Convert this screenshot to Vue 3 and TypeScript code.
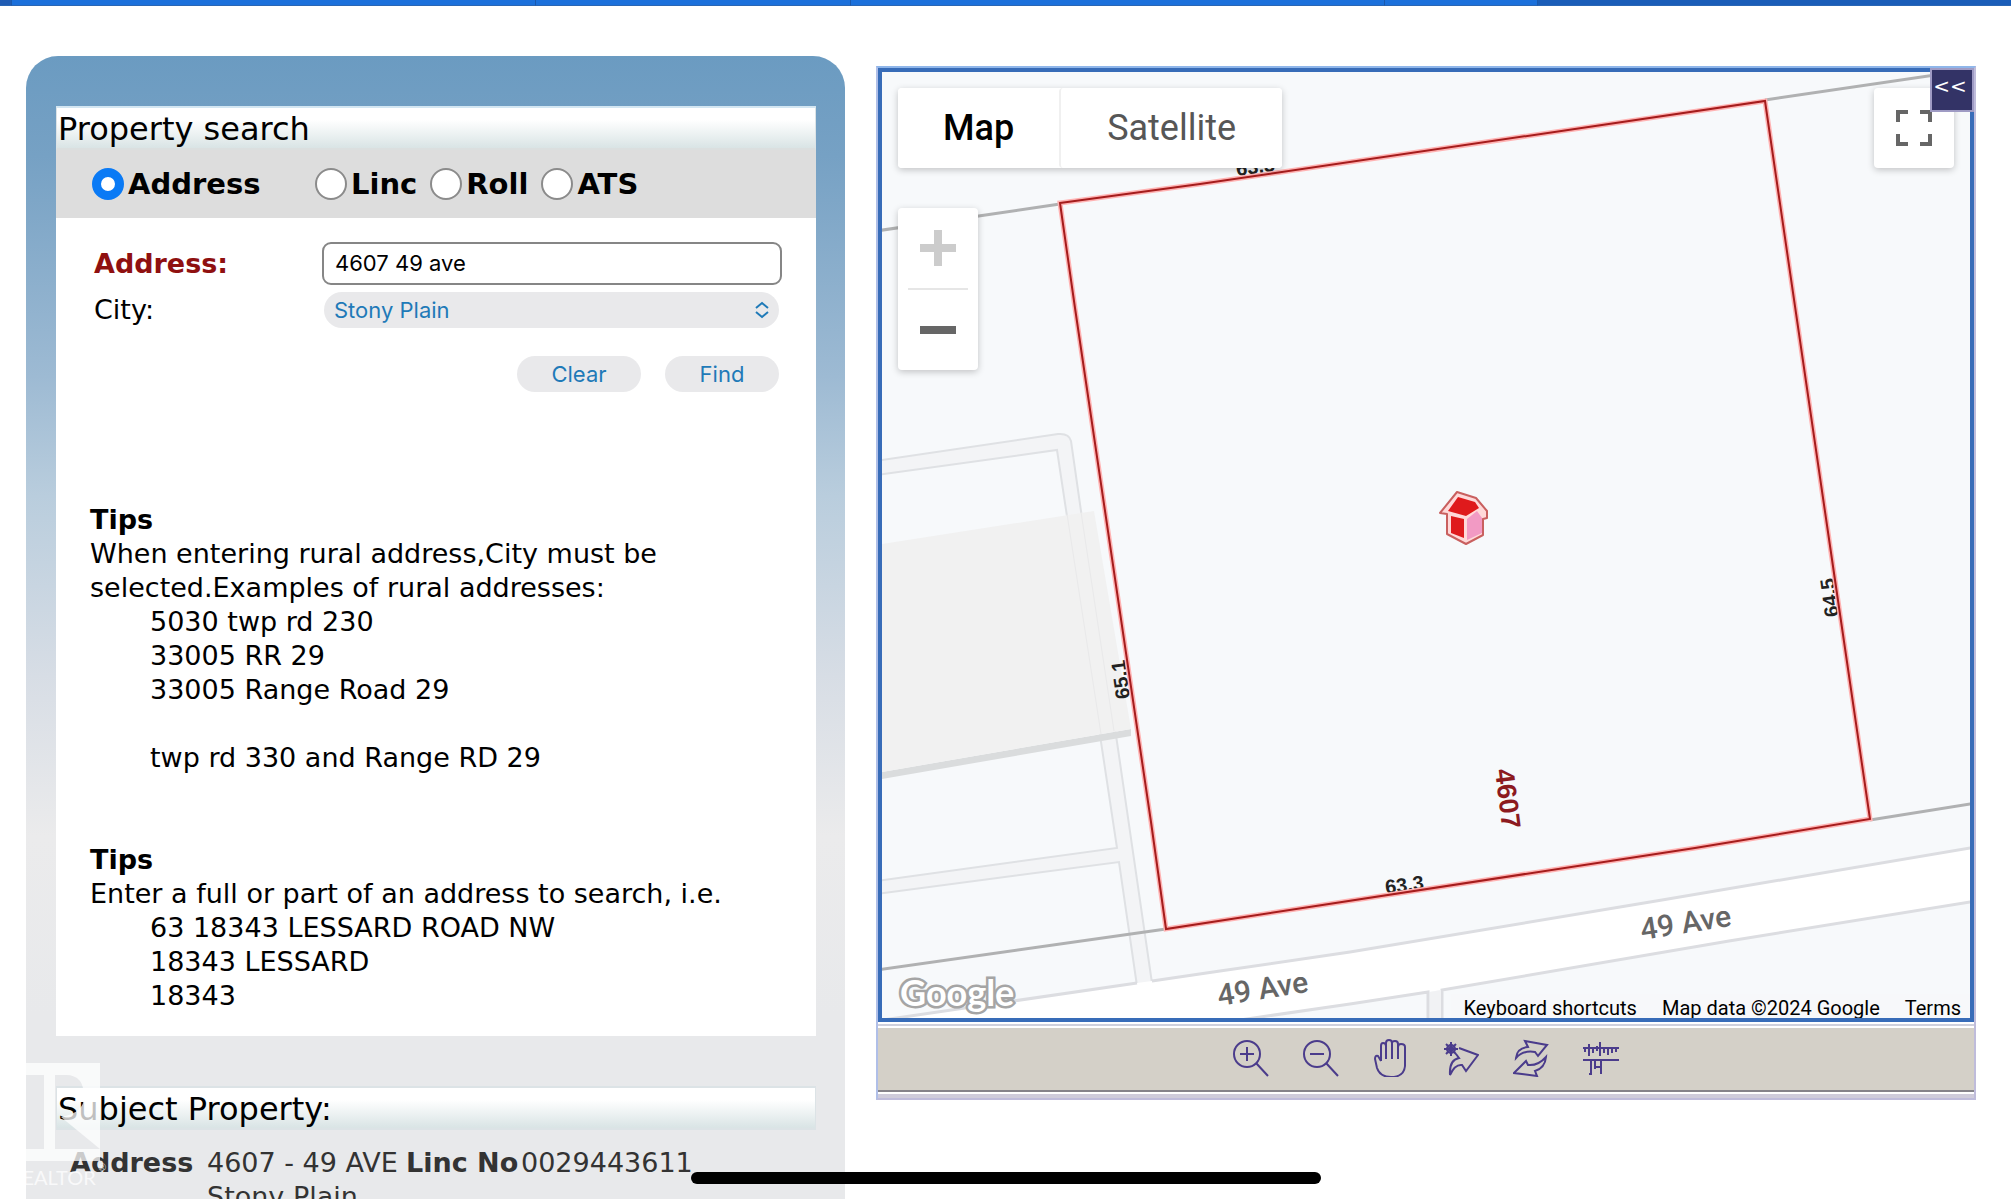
<script setup lang="ts">
import { ref } from 'vue'

interface SearchMode {
  id: string
  label: string
}

const modes: SearchMode[] = [
  { id: 'address', label: 'Address' },
  { id: 'linc', label: 'Linc' },
  { id: 'roll', label: 'Roll' },
  { id: 'ats', label: 'ATS' },
]

const mode = ref('address')
const address = ref('4607 49 ave')
const city = ref('Stony Plain')
const mapType = ref<'map' | 'satellite'>('map')

const ruralExamples: string[] = ['5030 twp rd 230', '33005 RR 29', '33005 Range Road 29']
const addressExamples: string[] = ['63 18343 LESSARD ROAD NW', '18343 LESSARD', '18343']

function clearForm(): void {
  address.value = ''
}
</script>

<template>
  <div class="page">
    <nav class="topbar" aria-label="Sections">
      <span class="seg edge"></span>
      <span class="seg one"></span>
      <span class="seg two"></span>
      <span class="seg three"></span>
      <span class="seg four"></span>
      <span class="seg rest"></span>
    </nav>

    <main class="columns">
      <section class="panel">
        <div class="card">
          <h1 class="heading">Property search</h1>
          <div class="modes" role="radiogroup" aria-label="Search by">
            <label v-for="m in modes" :key="m.id" class="mode" :class="m.id">
              <input v-model="mode" type="radio" name="mode" :value="m.id" />{{ m.label }}
            </label>
          </div>

          <form class="form" @submit.prevent>
            <label for="address" class="required">Address:</label>
            <input id="address" v-model="address" type="text" class="field" />
            <label for="city">City:</label>
            <div class="picker">
              <select id="city" v-model="city">
                <option>Stony Plain</option>
              </select>
              <svg class="chevrons" viewBox="0 0 16 18" aria-hidden="true">
                <path d="M2 7 8 2l6 5M2 11l6 5 6-5" />
              </svg>
            </div>
            <div class="actions">
              <button type="button" class="pill clear" @click="clearForm">Clear</button>
              <button type="submit" class="pill find">Find</button>
            </div>
          </form>

          <div class="tips">
            <h2>Tips</h2>
            <p>When entering rural address,City must be selected.Examples of rural addresses:</p>
            <ul>
              <li v-for="e in ruralExamples" :key="e">{{ e }}</li>
              <li class="spaced">twp rd 330 and Range RD 29</li>
            </ul>
            <h2>Tips</h2>
            <p>Enter a full or part of an address to search, i.e.</p>
            <ul class="last">
              <li v-for="e in addressExamples" :key="e">{{ e }}</li>
            </ul>
          </div>
        </div>

        <h1 class="heading subject">Subject Property:</h1>
        <table class="facts">
          <tbody>
            <tr>
              <th scope="row" class="c1">Address</th>
              <td class="c2">4607 - 49 AVE<br />Stony Plain</td>
              <th scope="row" class="c3">Linc No</th>
              <td>0029443611</td>
            </tr>
          </tbody>
        </table>
      </section>

      <section class="mapframe">
        <div class="map">
          <svg class="canvas" viewBox="882 72 1088 946" role="img" aria-label="Parcel map">
            <rect x="882" y="72" width="1088" height="946" fill="#f7f9fb" />
            <!-- parking lanes -->
            <g stroke="#dfe1e4" stroke-width="2">
              <path
                d="M876 461 1058 434Q1069 433 1071 441L1081 511 1117 742 1152 983 1137 986 1119 862 876 894V881L1117 848 1057 450 876 475Z"
                fill="#f3f4f6"
              />
            </g>
            <!-- road -->
            <path
              d="M876 1021 1137 983 1152 981 1220 971 1350 952 1662 900 1976 847V901L1729 940 1441 990 1350 1004 1240 1022H876Z"
              fill="#fff"
            />
            <g fill="none" stroke="#dcdde1" stroke-width="3">
              <path d="M876 1021 1137 983M1152 981 1220 971 1350 952 1662 900 1976 847" />
              <path d="M1240 1020 1350 1004 1428 992V1020M1442 1020V990L1729 941 1976 901" />
            </g>
            <path d="M1430 992 1441 990V1020H1430Z" fill="#f1f2f4" />
            <!-- building -->
            <path d="M876 773 1131 729V736L876 780Z" fill="#dadcdd" />
            <path d="M876 545 1094 511 1131 729 876 773Z" fill="#f1f1f1" />
            <path
              d="M1067 514 1101 734M1081 512 1114 731"
              fill="none"
              stroke="#e9e9ea"
              stroke-width="1"
            />
            <!-- neighbouring parcel edges -->
            <g stroke="#b0b1b2" stroke-width="3">
              <path d="M876 231 1060 204" />
              <path d="M1765 100 1976 69" />
              <path d="M1870 820 1976 803" />
              <path d="M876 970 1166 929" />
            </g>
            <g class="dims">
              <text transform="translate(1237 176) rotate(-8)">63.3</text>
              <text transform="translate(1130 698) rotate(-98)">65.1</text>
              <text transform="translate(1839 616) rotate(-98)">64.5</text>
              <text transform="translate(1386 894) rotate(-7)">63.3</text>
            </g>
            <path
              d="M1060 203 1200 184 1765 101 1835 580 1870 819 1695 848 1166 929 1151 822 1075 308Z"
              fill="none"
              stroke="#ffb3b3"
              stroke-width="5"
            />
            <path
              d="M1060 203 1200 184 1765 101 1835 580 1870 819 1695 848 1166 929 1151 822 1075 308Z"
              fill="none"
              stroke="#a51c1c"
              stroke-width="2"
            />
            <text class="lot" transform="translate(1495 770) rotate(83)">4607</text>
            <text class="road" transform="translate(1219 1006) rotate(-9)">49 Ave</text>
            <text class="road" transform="translate(1642 940) rotate(-9)">49 Ave</text>
            <text class="brand" x="900" y="1006">Google</text>
            <!-- subject property marker -->
            <g stroke-linejoin="round">
              <path
                d="M1457 492 1476 498 1487 511V518L1483 519V535L1466 544 1447 534V514L1440 513Z"
                fill="#ffd9d9"
                stroke="#c9605f"
                stroke-width="2"
              />
              <path d="M1458 497 1475 502 1479 508 1466 516 1448 511Z" fill="#df1a1c" />
              <path d="M1451 516 1464 519V538L1451 533Z" fill="#df1a1c" />
              <path d="M1467 519 1477 511 1482 518V533L1467 540Z" fill="#f29ac4" />
            </g>
          </svg>

          <div class="types">
            <button type="button" :class="{ on: mapType === 'map' }" class="t-map" @click="mapType = 'map'">Map</button>
            <button type="button" :class="{ on: mapType === 'satellite' }" class="t-sat" @click="mapType = 'satellite'">Satellite</button>
          </div>
          <div class="zoom">
            <button type="button" aria-label="Zoom in">
              <svg viewBox="0 0 36 36"><path d="M14 0h8v14h14v8H22v14h-8V22H0v-8h14z" fill="#ccc" /></svg>
            </button>
            <hr />
            <button type="button" aria-label="Zoom out">
              <svg viewBox="0 0 36 36"><path d="M0 14h36v8H0z" fill="#666" /></svg>
            </button>
          </div>
          <button type="button" class="full" aria-label="Toggle fullscreen">
            <svg viewBox="0 0 36 36">
              <path d="M0 0h12v4H4v8H0zM24 0h12v12h-4V4h-8zM0 24h4v8h8v4H0zM32 24h4v12H24v-4h8z" fill="#666" />
            </svg>
          </button>
          <div class="credits">
            <a href="#">Keyboard shortcuts</a>
            <span>Map data ©2024 Google</span>
            <a href="#">Terms</a>
          </div>
        </div>
        <button type="button" class="collapse" aria-label="Collapse map">&lt;&lt;</button>

        <div class="tools">
          <button type="button" aria-label="Zoom in">
            <svg viewBox="0 0 36 38"><circle cx="14" cy="15" r="13" /><path d="M23 24 35 37M7 15h14M14 8v14" /></svg>
          </button>
          <button type="button" aria-label="Zoom out">
            <svg viewBox="0 0 36 38"><circle cx="14" cy="15" r="13" /><path d="M23 24 35 37M7 15h14" /></svg>
          </button>
          <button type="button" aria-label="Pan">
            <svg viewBox="0 0 36 38">
              <path
                d="M8 22V7Q8 4 10 4 13 4 13 7V20M13 7V4Q13 1 16 1 19 1 19 4V20M19 4Q19 2 22 2 25 2 25 5V20M25 8Q25 5 28 5 32 5 32 8V27Q31 38 18 38 7 38 4 29L2 20Q2 16 5 17L8 22"
              />
            </svg>
          </button>
          <button type="button" aria-label="Previous view">
            <svg viewBox="0 0 36 38">
              <path
                d="M16 9 35 16 23 32 19 26Q12 25 7 36 6 21 16 19L13 15M8 3V17M1 10H15M3 5 13 15M13 5 3 15"
              />
              <circle cx="8" cy="10" r="4" />
            </svg>
          </button>
          <button type="button" aria-label="Refresh">
            <svg viewBox="0 0 36 38">
              <path
                d="M12 2 34 6 25 17 22 13Q10 11 3 19 4 9 15 8ZM24 37 1 34 13 22 15 26Q25 27 33 18 32 29 22 32Z"
              />
            </svg>
          </button>
          <button type="button" aria-label="Measure">
            <svg viewBox="0 0 36 38">
              <path
                d="M0 9H36M0 21H36M6 5V17M10 9V14M17 3V17M21 9V14M14 7V12M25 9V16M29 9V14M33 9V13M2 9V13M8 21V35M18 21V35M12 22V30M12 28H18M6 35H9"
              />
            </svg>
          </button>
        </div>
        <div class="track"></div>
      </section>
    </main>

    <svg class="stamp" viewBox="0 0 110 136" aria-label="Realtor">
      <path
        fill-rule="evenodd"
        d="M4 0H100V98H4ZM16 12V86H44V12ZM55 12V86H100L61 54Q84 50 84 34 84 12 66 12Z"
        fill="#fff"
        opacity=".75"
      />
      <text x="10" y="122">REALTOR</text>
      <text x="98" y="108" class="reg">®</text>
    </svg>
    <div class="home"></div>
  </div>
</template>

<style>
body {
  margin: 0;
  background: #fff;
}
</style>

<style scoped>
* {
  box-sizing: border-box;
}
.page {
  position: relative;
  height: 100vh;
  overflow: hidden;
  background: #fff;
  color: #000;
  font: 27px/34px "DejaVu Sans", Verdana, sans-serif;
}
button {
  margin: 0;
  padding: 0;
  border: 0;
  cursor: pointer;
}
.topbar {
  display: flex;
  height: 6px;
}
.seg {
  background: #1b70db;
  border-bottom: 1px solid #2a66b4;
  border-right: 1px solid #1a59ad;
}
.edge { flex: 11; background: #1f5cb4; }
.one { flex: 524; }
.two { flex: 315; }
.three { flex: 534; }
.four { flex: 153; }
.rest { flex: 474; background: #1a5db8; border-right: 0; }
.columns {
  display: grid;
  grid-template-columns: minmax(0, 819fr) minmax(0, 1100fr);
  align-items: start;
  gap: 31px;
  padding: 50px 35px 0 26px;
}
.panel {
  min-height: calc(100vh - 56px);
  padding: 50px 29px 0 30px;
  border-radius: 32px 32px 0 0;
  background: linear-gradient(#6b9bc1 0, #76a1c4 100px, #9dbad3 320px, #b9cddd 440px, #d7dde5 620px, #ebebec 780px, #e8e9eb 960px);
}
.card {
  background: #fff;
}
.heading {
  height: 44px;
  margin: 0;
  padding: 0 1px;
  border: 2px solid #dce3e6;
  border-width: 2px 1px;
  background: linear-gradient(#fff 30%, #d9e4e5);
  font-size: 32px;
  font-weight: 400;
  line-height: 42px;
}
.card .heading {
  border-top-color: #d3e6f2;
  border-bottom-color: #dbdfdf;
}
.subject {
  margin-top: 50px;
}
.modes {
  display: flex;
  height: 68px;
  align-items: center;
  padding-left: 36px;
  background: #ddd;
  font-size: 29px;
  font-weight: 700;
}
.mode {
  display: flex;
  align-items: center;
  gap: 4px;
  margin-right: 13px;
  line-height: 38px;
}
.mode.address {
  width: 210px;
}
.mode input {
  appearance: none;
  width: 32px;
  height: 32px;
  margin: 0;
  border: 2px solid #8b8b8b;
  border-radius: 50%;
  background: #fff;
}
.mode input:checked {
  border: 9px solid #0a7af5;
}
.form {
  display: grid;
  grid-template-columns: 228px 1fr;
  row-gap: 7px;
  align-items: center;
  padding: 24px 34px 0 38px;
}
.required {
  color: #8f1010;
  font-weight: 700;
}
.field {
  width: 100%;
  height: 43px;
  padding: 0 11px 2px;
  border: 2px solid #868686;
  border-radius: 9px;
  background: #fff;
  color: #000;
  font: 22px "Inter", sans-serif;
}
.picker {
  position: relative;
  margin: 0 3px 0 2px;
}
.picker select {
  appearance: none;
  display: block;
  width: 100%;
  height: 36px;
  padding: 0 10px;
  border: 0;
  border-radius: 18px;
  background: #e9e9eb;
  color: #1f7ab8;
  font: 22px "Inter", sans-serif;
}
.chevrons {
  position: absolute;
  top: 9px;
  right: 9px;
  width: 16px;
  height: 18px;
  fill: none;
  stroke: #1f7ab8;
  stroke-width: 2;
  pointer-events: none;
}
.actions {
  display: flex;
  grid-column: 1 / -1;
  justify-content: flex-end;
  gap: 24px;
  margin: 21px 3px 0 0;
}
.pill {
  height: 36px;
  border-radius: 18px;
  background: #e9e9eb;
  color: #1f7ab8;
  font: 22px "Inter", sans-serif;
}
.clear { width: 124px; }
.find { width: 114px; }
.tips {
  padding: 111px 34px 23px;
}
.tips h2,
.tips p,
.tips ul {
  margin: 0;
  padding: 0;
  font-size: inherit;
}
.tips ul {
  padding: 0 0 68px 60px;
  list-style: none;
}
.tips ul.last {
  padding-bottom: 0;
}
.tips .spaced {
  margin-top: 34px;
}
.facts {
  width: 100%;
  margin-top: 16px;
  border-collapse: collapse;
  table-layout: fixed;
  color: #333;
  text-align: left;
}
.facts th,
.facts td {
  padding: 0;
  vertical-align: top;
  white-space: nowrap;
}
.facts .c1 { width: 151px; padding-left: 14px; }
.facts .c2 { width: 199px; }
.facts .c3 { width: 115px; }
.mapframe {
  position: relative;
  margin-top: 10px;
  border: 2px solid #bfbcdb;
  border-top-color: #8fb6ea;
  border-left-color: #b0bfe8;
}
.map {
  position: relative;
  overflow: hidden;
  border: 4px solid #386cb8;
  background: #f7f9fb;
}
.canvas {
  display: block;
  width: 100%;
}
.dims text {
  fill: #222;
  font: 700 20px "Liberation Sans", Arial, sans-serif;
}
.lot {
  fill: #8c1a1f;
  font: 700 27px "Liberation Sans", Arial, sans-serif;
}
.road {
  fill: #666;
  font: 500 30px Roboto, sans-serif;
}
.brand {
  fill: #fff;
  stroke: #a5a5a5;
  stroke-width: 5px;
  paint-order: stroke;
  font: 700 36px Lato, sans-serif;
}
.types,
.zoom,
.full {
  position: absolute;
  border-radius: 4px;
  background: #fff;
  box-shadow: 0 2px 7px rgba(0, 0, 0, 0.22);
}
.types {
  top: 16px;
  left: 16px;
  display: flex;
}
.types button {
  height: 80px;
  padding: 0 46px;
  border-radius: 4px;
  background: #fff;
  color: #565656;
  font: 400 36px Roboto, sans-serif;
}
.types .on {
  color: #000;
  font-weight: 500;
}
.types .t-map {
  padding: 0 45px;
}
.types .t-sat {
  border-left: 2px solid #f0f0f0;
}
.zoom {
  top: 136px;
  left: 16px;
  width: 80px;
}
.zoom button,
.full {
  display: flex;
  align-items: center;
  justify-content: center;
  width: 80px;
  height: 80px;
  background: none;
}
.zoom hr {
  height: 2px;
  margin: 0 10px;
  border: 0;
  background: #e6e6e6;
}
.zoom svg,
.full svg {
  width: 36px;
  height: 36px;
}
.full {
  top: 16px;
  right: 16px;
  background: #fff;
}
.credits {
  position: absolute;
  right: 0;
  bottom: -4px;
  display: flex;
  gap: 25px;
  height: 28px;
  padding: 0 9px 0 12px;
  background: rgba(246, 248, 250, 0.8);
  font: 20px/28px Roboto, sans-serif;
}
.credits a {
  color: inherit;
  text-decoration: none;
}
.collapse {
  position: absolute;
  top: 0;
  right: 0;
  width: 44px;
  height: 44px;
  padding: 0 4px 8px 0;
  border: 2px solid #9f9bc4;
  background: #333366;
  color: #fff;
  font: 20px "DejaVu Sans", Verdana, sans-serif;
}
.tools {
  display: flex;
  justify-content: center;
  gap: 34px;
  height: 66px;
  margin-top: 2px;
  padding-top: 13px;
  border-top: 2px solid #cfd0dc;
  background: #d4d0c8;
  box-shadow: inset 0 2px #fff;
}
.tools button {
  width: 36px;
  height: 38px;
  background: none;
}
.tools svg {
  display: block;
  width: 36px;
  height: 38px;
  fill: none;
  stroke: #4b3c8c;
  stroke-width: 2;
}
.track {
  height: 8px;
  border-top: 2px solid #85838a;
  background: #cfccdb;
  box-shadow: inset 0 2px #fff;
}
.stamp {
  position: absolute;
  bottom: 0;
  left: 0;
  width: 110px;
  height: 136px;
}
.stamp text {
  fill: #fff;
  opacity: 0.75;
  font: 20px Lato, sans-serif;
}
.stamp .reg {
  font-size: 10px;
}
.home {
  position: absolute;
  bottom: 15px;
  left: 50%;
  width: 630px;
  height: 12px;
  border-radius: 6px;
  background: #000;
  transform: translateX(-50%);
}
</style>
